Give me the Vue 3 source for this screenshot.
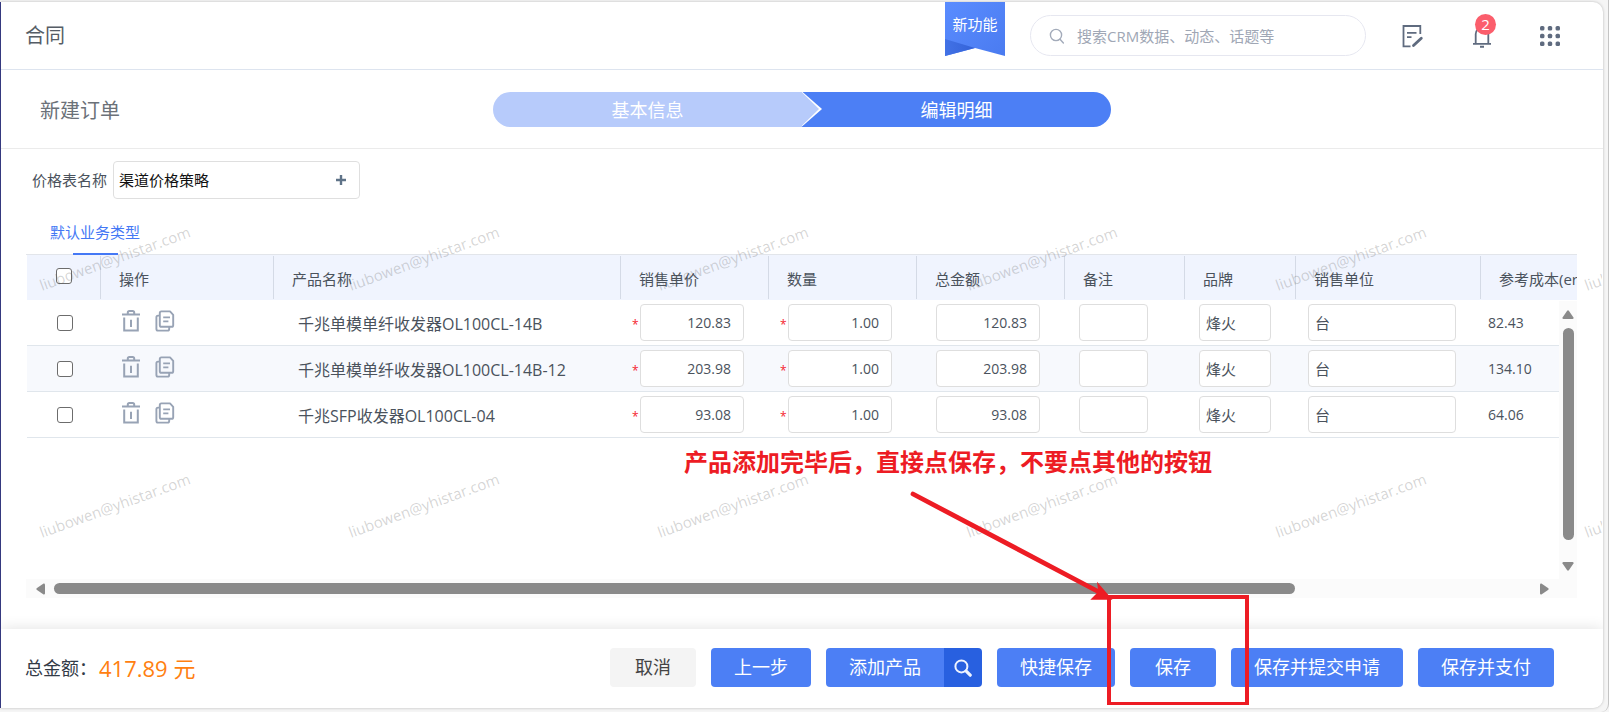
<script setup>
import { ref, computed } from 'vue'

const priceBook = ref('渠道价格策略')
const keyword = ref('')
const allChecked = ref(false)

const rows = ref([
  { id: 1, checked: false, name: '千兆单模单纤收发器OL100CL-14B', price: '120.83', count: '1.00', sum: '120.83', note: '', brand: '烽火', unit: '台', cost: '82.43' },
  { id: 2, checked: false, name: '千兆单模单纤收发器OL100CL-14B-12', price: '203.98', count: '1.00', sum: '203.98', note: '', brand: '烽火', unit: '台', cost: '134.10' },
  { id: 3, checked: false, name: '千兆SFP收发器OL100CL-04', price: '93.08', count: '1.00', sum: '93.08', note: '', brand: '烽火', unit: '台', cost: '64.06' }
])

const total = computed(() => rows.value.reduce((s, r) => s + Number(r.sum), 0).toFixed(2))

const headings = ['操作', '产品名称', '销售单价', '数量', '总金额', '备注', '品牌', '销售单位', '参考成本(erp)']

const marks = []
for (const y of [291, 538]) {
  for (let i = 0; i < 6; i++) marks.push({ x: 42 + i * 309, y })
}

const dots = []
for (const y of [2, 9, 16]) for (const x of [2, 9, 16]) dots.push({ x, y })
</script>

<template>
  <div class="page">
    <div class="panel">
      <header class="topbar">
        <h1>合同</h1>
        <a class="ribbon" href="#">
          <svg width="60" height="54" viewBox="0 0 60 54" aria-hidden="true">
            <defs>
              <linearGradient id="rib" x1="0" y1="0" x2="1" y2="1">
                <stop offset="0" stop-color="#5a8cff" /><stop offset="1" stop-color="#4a7bf0" />
              </linearGradient>
              <linearGradient id="fold" x1="0" y1="0" x2="1" y2="0">
                <stop offset="0" stop-color="#4272e6" /><stop offset="1" stop-color="#3462d8" />
              </linearGradient>
            </defs>
            <path d="M0 0H60V54L30 46L0 54Z" fill="url(#rib)" />
            <path d="M0 37L30 46L0 54Z" fill="url(#fold)" />
          </svg>
          <span>新功能</span>
        </a>
        <div class="search">
          <svg width="16" height="16" viewBox="0 0 16 16" fill="none" stroke="#a3abba" stroke-width="1.4" aria-hidden="true">
            <circle cx="7" cy="7" r="5.6" /><path d="M11 11.2L14.4 15" stroke-linecap="round" />
          </svg>
          <input v-model="keyword" type="text" aria-label="搜索" placeholder="搜索CRM数据、动态、话题等">
        </div>
        <button class="tool" type="button" aria-label="记录">
          <svg width="22" height="24" viewBox="0 0 22 24" fill="none" stroke="#5f6b7f" stroke-width="1.8">
            <path d="M18.3 10V2H1.5V22.3H8.5" /><path d="M5 8.8H14.5M5 13.2H9.5" />
            <path d="M11.5 21.6L19.3 14.2" stroke-width="2.8" stroke-linecap="round" />
          </svg>
        </button>
        <button class="tool bell" type="button" aria-label="通知">
          <svg width="20" height="24" viewBox="0 0 20 24" fill="none" stroke="#5f6b7f" stroke-width="1.8">
            <path d="M3.7 19.6V10A6.3 6.3 0 0 1 16.3 10V19.6M1 19.8H19" /><path d="M8 22.8H12" stroke-width="2" />
          </svg>
          <span class="badge">2</span>
        </button>
        <button class="tool" type="button" aria-label="应用">
          <svg width="20" height="20" viewBox="0 0 18 18" fill="#5f6b7f">
            <rect v-for="(d, i) in dots" :key="i" :x="d.x - 2" :y="d.y - 2" width="4" height="4" rx="1.4" />
          </svg>
        </button>
      </header>

      <section class="steps-bar">
        <h2>新建订单</h2>
        <ol class="steps">
          <li class="step done">基本信息</li>
          <li class="step now">编辑明细</li>
        </ol>
      </section>

      <main class="content">
        <div class="price-row">
          <label for="book">价格表名称</label>
          <div class="lookup">
            <input id="book" v-model="priceBook" type="text">
            <button type="button" aria-label="选择价格表">
              <svg width="10" height="10" viewBox="0 0 10 10" stroke="#5f7388" stroke-width="2.4"><path d="M5 0V10M0 5H10" /></svg>
            </button>
          </div>
        </div>

        <nav class="tabs"><a href="#" class="tab">默认业务类型</a></nav>

        <div class="grid">
          <div class="viewport">
            <table>
              <colgroup>
                <col class="w-check"><col class="w-act"><col class="w-name">
                <col class="w-num"><col class="w-num"><col class="w-num">
                <col class="w-note"><col class="w-brand"><col class="w-unit"><col>
              </colgroup>
              <thead>
                <tr>
                  <th class="check"><input v-model="allChecked" type="checkbox" aria-label="全选"></th>
                  <th v-for="h in headings" :key="h">{{ h }}</th>
                </tr>
              </thead>
              <tbody>
                <tr v-for="r in rows" :key="r.id">
                  <td class="check"><input v-model="r.checked" type="checkbox" :aria-label="r.name"></td>
                  <td class="acts">
                    <div>
                      <button type="button" aria-label="删除">
                        <svg width="20" height="22" viewBox="0 0 20 22" fill="none" stroke="#98a3b5" stroke-width="2">
                          <path d="M1 4.6H19M6.8 4V2.6Q6.8 1 8.4 1H11.6Q13.2 1 13.2 2.6V4M3.2 7.4V20.6H16.8V7.4M10 9.8V17" />
                        </svg>
                      </button>
                      <button type="button" aria-label="复制">
                        <svg width="20" height="22" viewBox="0 0 20 22" fill="none" stroke="#98a3b5" stroke-width="1.9" stroke-linejoin="round">
                          <path d="M6.4 1.4H15L18.2 4.8V15.2Q18.2 16.8 16.6 16.8H6.4Q4.8 16.8 4.8 15.2V3Q4.8 1.4 6.4 1.4Z" />
                          <path d="M4.8 5.6H3Q1.4 5.6 1.4 7.2V19Q1.4 20.6 3 20.6H12.6Q14.2 20.6 14.2 19V16.8M8.2 7.4H15M8.2 11.4H13.4" />
                        </svg>
                      </button>
                    </div>
                  </td>
                  <td class="name">{{ r.name }}</td>
                  <td><div class="field"><span class="star">*</span><input v-model="r.price" class="num" type="text" aria-label="销售单价"></div></td>
                  <td><div class="field"><span class="star">*</span><input v-model="r.count" class="num" type="text" aria-label="数量"></div></td>
                  <td><div class="field"><span class="star"></span><input v-model="r.sum" class="num" type="text" aria-label="总金额"></div></td>
                  <td><div class="field pad-note"><input v-model="r.note" class="note" type="text" aria-label="备注"></div></td>
                  <td><div class="field pad-brand"><input v-model="r.brand" class="brand" type="text" aria-label="品牌"></div></td>
                  <td><div class="field pad-unit"><input v-model="r.unit" class="unit" type="text" aria-label="销售单位"></div></td>
                  <td class="cost">{{ r.cost }}</td>
                </tr>
              </tbody>
            </table>
            <div class="vbar">
              <svg width="12" height="9" viewBox="0 0 12 9" fill="#8a8a8a"><path d="M5 1Q6 -.4 7 1L11.5 7.6Q11.8 8.8 10.5 9H1.5Q.2 8.8 .5 7.6Z" /></svg>
              <div class="track"><div class="thumb"></div></div>
              <svg width="12" height="9" viewBox="0 0 12 9" fill="#8a8a8a"><path d="M5 8Q6 9.4 7 8L11.5 1.4Q11.8 .2 10.5 0H1.5Q.2 .2 .5 1.4Z" /></svg>
            </div>
          </div>
          <div class="hbar">
            <svg width="9" height="12" viewBox="0 0 9 12" fill="#8a8a8a"><path d="M1 5Q-.4 6 1 7L7.6 11.5Q8.8 11.8 9 10.5V1.5Q8.8 .2 7.6 .5Z" /></svg>
            <div class="track"><div class="thumb"></div></div>
            <svg width="9" height="12" viewBox="0 0 9 12" fill="#8a8a8a"><path d="M8 5Q9.4 6 8 7L1.4 11.5Q.2 11.8 0 10.5V1.5Q.2 .2 1.4 .5Z" /></svg>
          </div>
        </div>
      </main>

      <footer class="footer">
        <p class="total">总金额：<strong>{{ total }} 元</strong></p>
        <div class="buttons">
          <button type="button" class="btn plain">取消</button>
          <button type="button" class="btn">上一步</button>
          <div class="split">
            <button type="button" class="btn">添加产品</button>
            <button type="button" class="find" aria-label="查找产品">
              <svg width="18" height="18" viewBox="0 0 18 18" fill="none" stroke="#eef3ff">
                <circle cx="7.4" cy="7.4" r="6" stroke-width="2" /><path d="M12.2 12.2L16.2 16.2" stroke-width="3.2" stroke-linecap="round" />
              </svg>
            </button>
          </div>
          <button type="button" class="btn">快捷保存</button>
          <button type="button" class="btn">保存</button>
          <button type="button" class="btn">保存并提交申请</button>
          <button type="button" class="btn">保存并支付</button>
        </div>
      </footer>

      <svg class="marks" aria-hidden="true">
        <text v-for="(m, i) in marks" :key="i" :x="m.x" :y="m.y" :transform="`rotate(-20 ${m.x} ${m.y})`">liubowen@yhistar.com</text>
      </svg>
    </div>

    <p class="callout">产品添加完毕后，直接点保存，不要点其他的按钮</p>
    <svg class="arrow" width="340" height="216" viewBox="0 0 340 216" fill="none" stroke="#ed1c24" aria-hidden="true">
      <path d="M4 5L190 103" stroke-width="4.8" stroke-linecap="round" />
      <path d="M202 110L183 110L190 103L189 95Z" fill="#ed1c24" stroke-width="1.4" />
      <rect x="200" y="108" width="138" height="107" stroke-width="4" />
    </svg>
  </div>
</template>

<style>
html, body { background: #f5f5f5; }
</style>

<style scoped>
* { box-sizing: border-box; }
.page {
  position: relative;
  display: flex;
  min-height: 100vh;
  padding: 2px 5px 4px 0;
  border-right: 1px solid #c4c4c4;
  border-bottom-right-radius: 8px;
  background: #f5f5f5;
  overflow: hidden;
  font-family: "Open Sans", "Noto Sans CJK SC", sans-serif;
  font-size: 15px;
  line-height: 20px;
  color: #4a525c;
}
input, button { font: inherit; color: inherit; margin: 0; }
button { border: 0; padding: 0; background: none; cursor: pointer; }
h1, h2, p, ol { margin: 0; padding: 0; font-weight: 400; }
a { text-decoration: none; }
svg { display: block; }

.panel {
  position: relative;
  flex: 1;
  min-width: 0;
  display: flex;
  flex-direction: column;
  background: #fff;
  border-left: 1px solid #35397f;
  border-radius: 0 10px 10px 0;
  box-shadow: 0 0 3px rgba(0, 0, 0, .25);
  overflow: hidden;
}

.topbar {
  display: flex;
  align-items: center;
  height: 68px;
  padding: 0 43px 0 24px;
  border-bottom: 1px solid #dde4ef;
}
h1 { flex: 1; font-size: 20px; line-height: 28px; color: #565d66; }
.ribbon {
  position: relative;
  align-self: flex-start;
  width: 60px;
  margin-right: 25px;
  color: #fff;
}
.ribbon span { position: absolute; inset: 12px 0 auto; text-align: center; }
.search {
  display: flex;
  align-items: center;
  gap: 12px;
  width: 336px;
  height: 41px;
  margin-right: 36px;
  padding: 0 18px;
  border: 1px solid #e6e7f0;
  border-radius: 21px;
}
.search input { flex: 1; min-width: 0; border: 0; outline: 0; padding: 0; background: none; }
.search input::placeholder { color: #a0a7b5; opacity: 1; }
.tool { position: relative; margin-right: 48px; }
.tool:last-child { margin-right: 0; }
.badge {
  position: absolute;
  left: 3px;
  top: -10px;
  width: 21px;
  height: 21px;
  border-radius: 50%;
  background: #fb5e6c;
  color: #fff;
  font-size: 15px;
  line-height: 21px;
}

.steps-bar {
  position: relative;
  display: flex;
  align-items: center;
  justify-content: center;
  height: 79px;
  border-bottom: 1px solid #ebebeb;
}
h2 { position: absolute; left: 39px; top: 27px; font-size: 20px; line-height: 28px; color: #6b7178; }
.steps { display: flex; width: 618px; height: 35px; border-radius: 18px; overflow: hidden; list-style: none; }
.step { flex: 1; font-size: 18px; line-height: 36px; text-align: center; color: #fff; background: #4c7ff5; }
.step.done { position: relative; background: #b7cbfb; }
.step.done::before,
.step.done::after { content: ""; position: absolute; top: 0; left: 100%; width: 20px; height: 35px; clip-path: polygon(0 0, 100% 50%, 0 100%); background: #fff; }
.step.done::after { width: 18px; margin-left: -1px; background: #b7cbfb; }

.content { flex: 1; display: flex; flex-direction: column; padding: 12px 26px 31px 25px; background: #fff; }
.price-row { display: flex; align-items: center; gap: 6px; padding-left: 6px; }
.lookup { display: flex; align-items: center; width: 247px; height: 38px; padding: 0 13px 0 5px; border: 1px solid #dfdfdf; border-radius: 4px; }
.lookup input { flex: 1; min-width: 0; border: 0; outline: 0; padding: 0; color: #111; background: none; }
.tabs { display: flex; height: 56px; padding-left: 24px; border-bottom: 1px solid #e2e5ea; }
.tab { position: relative; height: 56px; padding-top: 23px; color: #4478f5; }
.tab::after { content: ""; position: absolute; left: 50%; bottom: 0; width: 45px; height: 2px; margin-left: -22px; background: #4478f5; }

.grid { flex: 1; display: flex; flex-direction: column; }
.viewport { position: relative; flex: 1; overflow: hidden; padding-left: 1px; }
table { width: 100%; table-layout: fixed; border-collapse: separate; border-spacing: 0; }
.w-check { width: 74px; }
.w-act { width: 173px; }
.w-name { width: 347px; }
.w-num { width: 148px; }
.w-note { width: 120px; }
.w-brand { width: 111px; }
.w-unit { width: 185px; }
th {
  height: 45px;
  padding: 2px 0 0 18px;
  text-align: left;
  font-weight: 400;
  white-space: nowrap;
  overflow: hidden;
  background: linear-gradient(#d4dae6, #d4dae6) right center / 1px 43px no-repeat #f0f4fe;
}
th:last-child { background: #f0f4fe; }
th.check { padding: 0 0 3px; }
.check { text-align: center; }
.check input {
  appearance: none;
  display: block;
  width: 16px;
  height: 16px;
  margin: 0 auto;
  border: 1px solid #6c6c6c;
  border-radius: 3px;
  background: #fff;
}
td { height: 46px; padding: 0; border-bottom: 1px solid #e0e6ec; white-space: nowrap; }
td.check { padding-left: 1px; }
tbody tr:nth-child(even) td { background: #f7f9fd; }
.acts div { display: flex; gap: 14px; padding: 0 0 4px 20px; }
.name { padding: 3px 0 0 24px; font-size: 16px; }
.field { display: flex; align-items: center; }
.star { width: 19px; padding: 4px 0 0 11px; color: #f5222d; line-height: 20px; font-size: 12px; }
.field input { height: 37px; border: 1px solid #dedede; border-radius: 4px; outline: 0; padding: 0 6px; background: #fff; }
.field .num { width: 104px; padding-right: 12px; text-align: right; font-size: 14px; }
.pad-note { padding-left: 14px; }
.pad-brand { padding-left: 14px; }
.pad-unit { padding-left: 12px; }
.field .note { width: 69px; }
.field .brand { width: 72px; }
.field .unit { width: 148px; }
.cost { padding-left: 7px; font-size: 14px; }

.vbar {
  position: absolute;
  top: 46px;
  right: 0;
  bottom: 0;
  width: 18px;
  display: flex;
  flex-direction: column;
  align-items: center;
  gap: 9px;
  padding: 9px 0 8px;
  background: #fbfbfb;
}
.vbar .track { flex: 1; }
.vbar .thumb { width: 11px; height: 94%; border-radius: 6px; background: #8a8a8a; }
.hbar { display: flex; align-items: center; gap: 9px; height: 19px; padding: 0 28px 0 10px; background: #fbfbfb; }
.hbar .track { flex: 1; }
.hbar .thumb { width: 84%; height: 11px; border-radius: 6px; background: #8a8a8a; }

.footer {
  position: relative;
  display: flex;
  align-items: center;
  justify-content: space-between;
  height: 79px;
  padding: 0 49px 2px 24px;
  background: #fff;
  box-shadow: 0 0 14px rgba(0, 0, 0, .12);
}
.total { display: flex; align-items: center; gap: 2px; font-size: 18px; line-height: 28px; color: #333b47; }
.total strong { font-size: 22px; font-weight: 400; color: #ff8010; }
.buttons { display: flex; gap: 15px; }
.split { display: flex; border-radius: 4px; overflow: hidden; }
.btn { min-width: 86px; height: 39px; padding: 0 23px; border-radius: 4px; background: #4c7ff5; color: #fff; font-size: 18px; line-height: 39px; white-space: nowrap; }
.split .btn { border-radius: 0; }
.plain { background: #f4f4f4; color: #444; }
.find { display: flex; align-items: center; justify-content: center; width: 38px; background: #2860e0; }

.marks { position: absolute; top: -2px; left: -1px; width: 100%; height: 100%; pointer-events: none; }
.marks text { font-size: 15px; font-weight: 500; fill: rgba(90, 90, 90, .26); }
.callout {
  position: absolute;
  right: 396px;
  top: 445px;
  font-size: 24px;
  line-height: 34px;
  font-weight: 700;
  color: #ed1c24;
  white-space: nowrap;
  pointer-events: none;
}
.arrow { position: absolute; right: 359px; top: 489px; pointer-events: none; }
</style>
